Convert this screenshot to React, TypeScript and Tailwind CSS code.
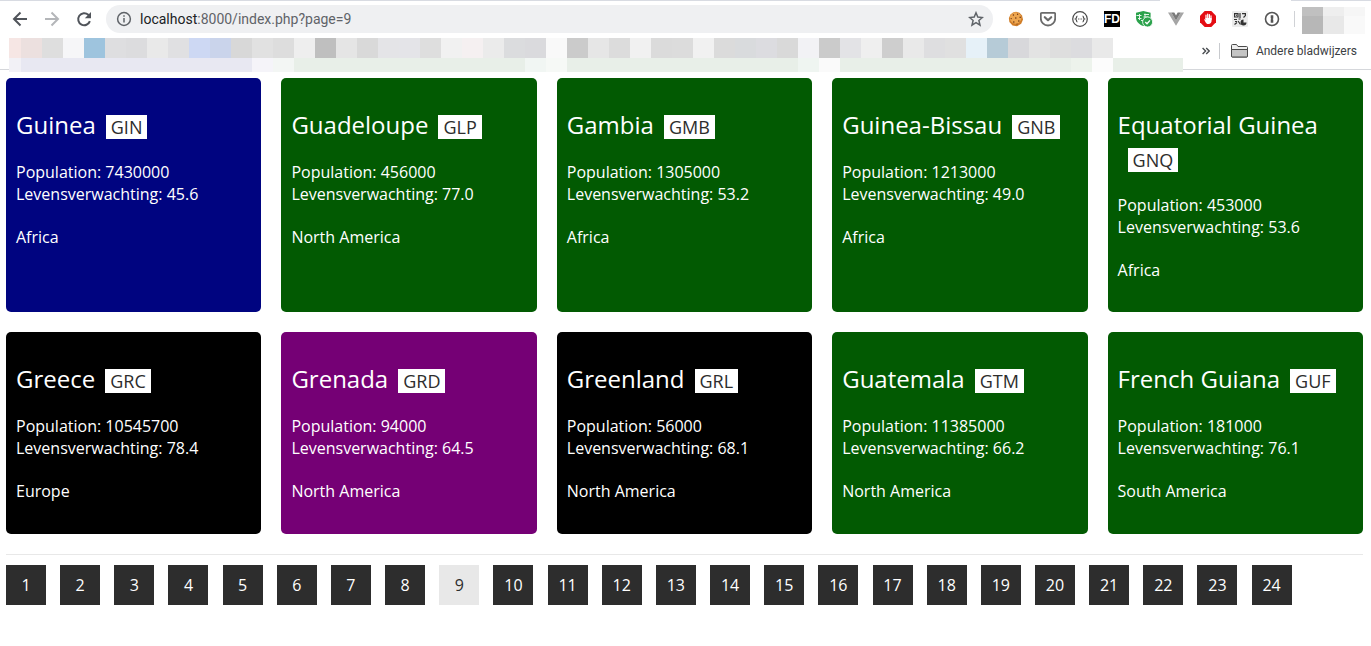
import React from 'react';

type Country = { name: string; code: string; population: number; life: string; continent: string; tone: string };

const countries: Country[] = [
  { name: 'Guinea', code: 'GIN', population: 7430000, life: '45.6', continent: 'Africa', tone: 'bg-[#000480]' },
  { name: 'Guadeloupe', code: 'GLP', population: 456000, life: '77.0', continent: 'North America', tone: 'bg-[#025a02]' },
  { name: 'Gambia', code: 'GMB', population: 1305000, life: '53.2', continent: 'Africa', tone: 'bg-[#025a02]' },
  { name: 'Guinea-Bissau', code: 'GNB', population: 1213000, life: '49.0', continent: 'Africa', tone: 'bg-[#025a02]' },
  { name: 'Equatorial Guinea', code: 'GNQ', population: 453000, life: '53.6', continent: 'Africa', tone: 'bg-[#025a02]' },
  { name: 'Greece', code: 'GRC', population: 10545700, life: '78.4', continent: 'Europe', tone: 'bg-black' },
  { name: 'Grenada', code: 'GRD', population: 94000, life: '64.5', continent: 'North America', tone: 'bg-[#750075]' },
  { name: 'Greenland', code: 'GRL', population: 56000, life: '68.1', continent: 'North America', tone: 'bg-black' },
  { name: 'Guatemala', code: 'GTM', population: 11385000, life: '66.2', continent: 'North America', tone: 'bg-[#025a02]' },
  { name: 'French Guiana', code: 'GUF', population: 181000, life: '76.1', continent: 'South America', tone: 'bg-[#025a02]' },
];

const CURRENT_PAGE = 9;
const pages = Array.from({ length: 24 }, (_, i) => i + 1);

const upperTiles: string[] = (
  'ece0df dedede f6f6f8 9ec4de dedee0 dcdcde e9e9e9 e0e0e2 cdd8f3 cad4eb d8d8d8 e1e1e1 dddddd eeeeee ' +
  'bfbfbf e5e5e5 d9d9d9 e4e4e7 e4e4e8 dedede f1f1f1 f5f0f1 ebebeb dbdcde dadadd f9f9f9 cbcbcb e6e6e6 ' +
  'dcdcdc f1f1f1 dbdbdb dcdcdc f1f1f1 dbdbdb d9dbdd dcdce0 d9d9d9 f2f2f5 cbcbcb e3e3e6 efefef cecece ' +
  'e9e9e9 dedee0 e0e0e0 e6f1f8 b6cbd7 d8d8db e3e3e3 dedede dcdcdf e9e9e9'
).split(' ');

const lowerTiles: [number, string][] = [
  [12, 'f2f1f6'], [231, 'e8e8f2'], [21, 'f5f4f9'], [21, 'f3f6f4'], [231, 'e8efe8'], [21, 'f1f6f3'], [21, 'f6f9f6'],
  [231, 'e8efe8'], [21, 'eff5f1'], [21, 'fafafa'], [231, 'e8efe8'], [21, 'edf3ec'], [21, 'fcfcfc'], [70, 'e8efe8'],
];

function TileRow({ tiles, height }: { tiles: [number, string][]; height: number }) {
  return (
    <div className="flex">
      {tiles.map(([width, color], i) => (
        <span key={i} className="block shrink-0" style={{ width, height, backgroundColor: '#' + color }} />
      ))}
    </div>
  );
}

function BarButton({ label, children }: { label: string; children: React.ReactNode }) {
  return (
    <button type="button" aria-label={label} className="flex size-8 shrink-0 items-center justify-center">
      {children}
    </button>
  );
}

function Extensions() {
  return (
    <div className="flex shrink-0">
      <BarButton label="Cookies">
        <svg width="16" height="16" viewBox="0 0 16 16">
          <path d="M5 1.600 8 .8l3.500 1L14 4.500l1 4-1.800 4.200L9 15.200l-4.500-.7L1.400 11 .9 7l1.600-3.500z" fill="#d07d28" />
          <circle cx="7.600" cy="7" r="5.800" fill="#eda650" />
          <g fill="#6b3414">
            <circle cx="5.400" cy="4" r=".7" /><circle cx="9.600" cy="3.200" r=".7" /><circle cx="12.200" cy="6.200" r=".8" />
            <circle cx="3.200" cy="7.600" r=".7" /><circle cx="7.800" cy="7" r=".8" /><circle cx="10.800" cy="10" r=".8" />
            <circle cx="5.800" cy="11" r=".8" /><circle cx="9" cy="13" r=".6" />
          </g>
        </svg>
      </BarButton>
      <BarButton label="Pocket">
        <svg width="16" height="16" viewBox="0 0 16 16" fill="none" stroke="#6b6b6b" strokeWidth="1.800" strokeLinejoin="round" strokeLinecap="round">
          <path d="M1.800 1.900h12.400a1 1 0 0 1 1 1v4.400a7.200 7.200 0 0 1-14.400 0V2.900a1 1 0 0 1 1-1z" />
          <path d="M4.800 6.200 8 9.200l3.200-3" strokeWidth="2.200" />
        </svg>
      </BarButton>
      <BarButton label="JSON viewer">
        <svg width="16" height="16" viewBox="0 0 16 16" fill="none" stroke="#4a4a4a" strokeWidth="1.200">
          <circle cx="8" cy="8" r="7.300" />
          <path d="M5.400 5.200c-1.300 0-.5 2.300-1.800 2.800 1.300.5.500 2.800 1.800 2.800M10.600 5.200c1.300 0 .5 2.300 1.800 2.800-1.300.5-.5 2.800-1.800 2.800" />
          <path d="M6 8h.9M7.600 8h.9M9.200 8h.9" strokeWidth="1" />
        </svg>
      </BarButton>
      <BarButton label="FD">
        <span className="flex size-4 items-center justify-center bg-black font-['Liberation_Sans',sans-serif] text-xs leading-4 font-bold text-white">FD</span>
      </BarButton>
      <BarButton label="Shield">
        <svg width="18" height="18" viewBox="0 0 18 18">
          <path d="M1 2.800 8.300 1l7.300 1.800v4.700c0 4.200-3.200 7.200-7.300 8.500C4.200 14.700 1 11.700 1 7.500z" fill="#2ba24c" />
          <path d="M1.500 5.500h5M3 8.500h3.500M9 4.500h5M10 3.500v4M4.500 4v6M8.500 7h5M6 10.500h2.500" stroke="#e3f4e7" strokeWidth="1" />
          <circle cx="12.600" cy="12" r="5" fill="#2ba24c" stroke="#fff" strokeWidth=".8" />
          <path d="m10.300 12.100 1.700 1.700 3-3.400" fill="none" stroke="#fff" strokeWidth="1.400" />
        </svg>
      </BarButton>
      <BarButton label="Vue devtools">
        <svg width="16" height="16" viewBox="0 0 16 16">
          <path d="M0 1.500h3.300L8 9.500l4.700-8H16l-8 13.300z" fill="#a5a5a5" />
          <path d="M3.300 1.500h3L8 4.400l1.700-2.900h3L8 9.500z" fill="#7a7a7a" />
        </svg>
      </BarButton>
      <BarButton label="Ad blocker">
        <svg width="16" height="16" viewBox="0 0 16 16">
          <path d="M4.700 0h6.600L16 4.700v6.600L11.300 16H4.700L0 11.300V4.700z" fill="#e40d13" />
          <path d="M6 8V4.200M7.700 8V3.200M9.400 8V3.500M11 8.500V4.800" stroke="#fff" strokeWidth="1.200" strokeLinecap="round" />
          <path d="M5.400 7h6.200v2.800c0 2-1.200 3.200-3 3.200-2 0-2.800-1-4.400-4.600.6-.5 1.100-.2 1.600.6z" fill="#fff" />
        </svg>
      </BarButton>
      <BarButton label="QR code">
        <svg width="16" height="16" viewBox="0 0 16 16">
          <rect width="16" height="16" rx="1" fill="#ececec" />
          <g fill="none" stroke="#333" strokeWidth="1.200">
            <path d="M2.600 2.600H6V6H2.600zM8 2v5M10 2.600h3.400v2L11.500 6.500M2 8.500h3M6.500 8h2M3 10.500h2M2.500 13.500 5 11.500M6 10l2.500 3.500M4 4.300h.8" />
          </g>
          <path d="M11.500 8.500a3 3 0 1 0 3 3h-3z" fill="#333" />
        </svg>
      </BarButton>
      <BarButton label="Password manager">
        <svg width="16" height="16" viewBox="0 0 16 16">
          <circle cx="8" cy="8" r="6.500" fill="none" stroke="#555" strokeWidth="1.600" />
          <path d="M6.700 4.200h2.600v3.300l-.6.600.6.600v3.100H6.700V8.500l.6-.6-.6-.6z" fill="#555" />
        </svg>
      </BarButton>
    </div>
  );
}

function BrowserChrome() {
  return (
    <header className="border-b border-[#d5d7db] bg-white font-[Roboto,sans-serif]">
      <div className="flex h-px bg-[#d8dbe2] pr-20">
        <span className="ml-auto h-px w-[131px] bg-white" />
      </div>
      <div className="flex h-9 items-center pr-[6px] pl-1">
        <BarButton label="Back">
          <svg width="16" height="16" viewBox="0 0 16 16" fill="none" stroke="#50545a" strokeWidth="2"><path d="M15 8H2.500M8.500 1.500 2 8l6.500 6.500" /></svg>
        </BarButton>
        <BarButton label="Forward">
          <svg width="16" height="16" viewBox="0 0 16 16" fill="none" stroke="#b4b6b9" strokeWidth="2"><path d="M1 8h12.500M7.500 1.500 14 8l-6.500 6.500" /></svg>
        </BarButton>
        <BarButton label="Reload">
          <svg width="16" height="16" viewBox="0 0 16 16" fill="none" stroke="#50545a" strokeWidth="2">
            <path d="M13.900 10.100A6 6 0 1 1 12.300 3.800L14 5.500" /><path d="M15 1v6.200H8.800z" fill="#50545a" stroke="none" />
          </svg>
        </BarButton>
        <div className="ml-[6px] flex h-7 flex-1 items-center rounded-full bg-[#eff0f2] pr-[9px] pl-[10px]">
          <svg width="16" height="16" viewBox="0 0 16 16" fill="none" stroke="#5f6368" strokeWidth="1.500"><circle cx="8" cy="8" r="6.400" /><path d="M8 7v4.500M8 4.200v1.600" /></svg>
          <div className="ml-2 flex-1 text-sm leading-5 text-[#5f6368]">
            <span className="text-[#202124]">localhost</span>:8000/index.php?page=9
          </div>
          <button type="button" aria-label="Bookmark this page">
            <svg width="16" height="16" viewBox="0 0 16 16" fill="none" stroke="#5f6368" strokeWidth="1.500"><path d="m8 1.800 1.800 4.300 4.600.4-3.500 3 1.100 4.600L8 11.700l-4 2.400 1.100-4.600-3.500-3 4.600-.4z" /></svg>
          </button>
        </div>
        <div className="ml-[7px]"><Extensions /></div>
        <span className="ml-[6px] h-4 w-px bg-[#d0d2d6]" />
        <div className="ml-[7px] shrink-0 pt-[3px]">
          <TileRow height={9} tiles={[[21, 'c0c0c0'], [21, 'eeeeee'], [21, 'f6f6f6']]} />
          <TileRow height={18} tiles={[[21, 'b7b7b7'], [21, 'e8e8e8'], [21, 'f9f9f9']]} />
        </div>
      </div>
      <div className="flex h-8 items-start justify-between pr-[14px] pl-[9px]">
        <div className="mt-px h-[31px]">
          <TileRow height={20} tiles={[[12, 'f6e6e4'], ...upperTiles.map((c): [number, string] => [21, c])]} />
          <TileRow height={14} tiles={lowerTiles} />
        </div>
        <div className="mt-[6px] flex items-center text-xs leading-4 text-[#3c4043]">
          <button type="button" aria-label="More bookmarks">
            <svg width="8" height="8" viewBox="0 0 8 8" fill="none" stroke="#4a4d51" strokeWidth="1.400"><path d="m.6 1 3 3-3 3M4.200 1l3 3-3 3" /></svg>
          </button>
          <span className="ml-[9px] h-4 w-px bg-[#c8cace]" />
          <button type="button" className="ml-[11px] flex items-center gap-2">
            <svg width="17" height="14" viewBox="0 0 17 14" fill="#c4c4c4" stroke="#4a4a4a"><path d="M.5 12V1.500a1 1 0 0 1 1-1h4L7 2.500h8.500a1 1 0 0 1 1 1V12a1 1 0 0 1-1 1h-14a1 1 0 0 1-1-1z" fill="#eee" /><path d="M.5 5.500h16V12a1 1 0 0 1-1 1h-14a1 1 0 0 1-1-1z" /></svg>
            Andere bladwijzers
          </button>
        </div>
      </div>
    </header>
  );
}

function CountryCard({ country }: { country: Country }) {
  return (
    <article className={`min-h-[202px] rounded-[5px] px-[10px] pt-[30px] pb-[31px] text-white ${country.tone}`}>
      <h2 className="mb-5 text-2xl leading-[33px]">
        {country.name}
        <span className="ml-[10px] inline-block bg-white px-[5px] text-lg leading-6 text-[#2d2d2d]">{country.code}</span>
      </h2>
      <p>
        Population: {country.population}
        <br />
        Levensverwachting: {country.life}
      </p>
      <p className="mt-[21px]">{country.continent}</p>
    </article>
  );
}

export default function App() {
  return (
    <div className="min-h-screen bg-white font-['Open_Sans',sans-serif] text-base leading-[22px]">
      <BrowserChrome />
      <main className="pt-2 pr-2 pl-[6px]">
        <div className="grid grid-cols-5 gap-5">
          {countries.map((country) => (
            <CountryCard key={country.code} country={country} />
          ))}
        </div>
        <hr className="mt-5 border-[#e8e8e8]" />
        <nav aria-label="Pages" className="pt-[10px]">
          {pages.map((page) => (
            <React.Fragment key={page}>
              <a
                href={`?page=${page}`}
                aria-current={page === CURRENT_PAGE ? 'page' : undefined}
                className={`mr-[10px] inline-block size-10 text-center leading-10 ${page === CURRENT_PAGE ? 'bg-[#e8e8e8] text-[#2d2d2d]' : 'bg-[#2d2d2d] text-white'}`}
              >
                {page}
              </a>{' '}
            </React.Fragment>
          ))}
        </nav>
      </main>
    </div>
  );
}
